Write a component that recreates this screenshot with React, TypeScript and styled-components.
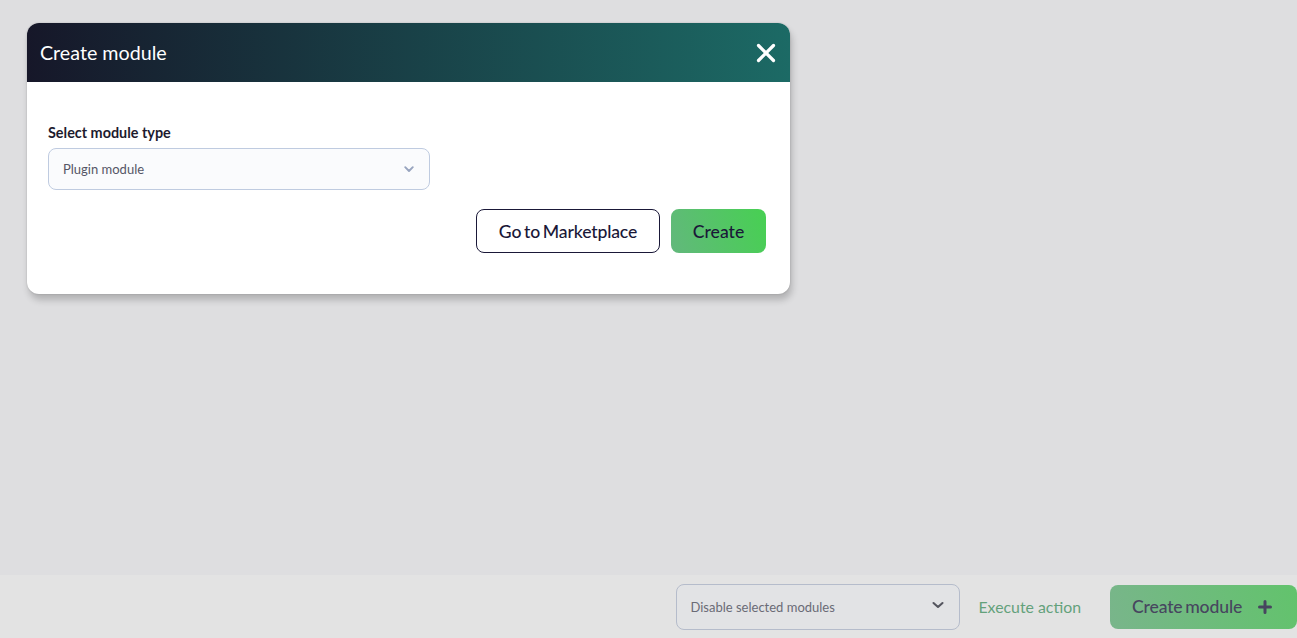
import React from "react";
import styled, { createGlobalStyle } from "styled-components";

const Global = createGlobalStyle`
  html, body { margin: 0; padding: 0; height: 100%; }
  body { font-family: Lato, "Liberation Sans", sans-serif; background: #dedee0; overflow: hidden; }
  #root { height: 100%; }
  * { box-sizing: border-box; }
`;

const Page = styled.div`
  height: 638px;
  display: flex;
  flex-direction: column;
`;

const Backdrop = styled.main`
  flex: 1;
  background: #dedee0;
  padding: 23px 27px;
`;

const Modal = styled.section`
  width: 763px;
  height: 271px;
  border-radius: 12px;
  background: #fff;
  box-shadow: 2px 6px 7px rgba(0, 0, 0, 0.2), 0 0 2px rgba(0, 0, 0, 0.18);
  overflow: hidden;
`;

const ModalHeader = styled.header`
  height: 59px;
  padding: 0 13px;
  display: flex;
  align-items: center;
  justify-content: space-between;
  background: linear-gradient(90deg, #161729 0%, #1c6a65 100%);
`;

const ModalTitle = styled.h2`
  margin: 0;
  font-size: 19.7px;
  font-weight: 400;
  line-height: 24px;
  color: #fff;
`;

const CloseButton = styled.button`
  width: 22px;
  height: 22px;
  padding: 0;
  border: 0;
  background: none;
  display: flex;
  cursor: pointer;
`;

const ModalBody = styled.div`
  padding: 42px 24px 0 21px;
`;

const FieldLabel = styled.label`
  display: block;
  font-size: 14.4px;
  font-weight: 700;
  line-height: 17px;
  color: #1d1b2e;
  margin-bottom: 7px;
`;

const SelectBox = styled.div<{ $w: number; $h: number; $dim?: boolean }>`
  width: ${(p) => p.$w}px;
  height: ${(p) => p.$h}px;
  display: flex;
  align-items: center;
  justify-content: space-between;
  border-radius: 8px;
  border: 1px solid ${(p) => (p.$dim ? "#b5bccb" : "#bfcbe0")};
  background: ${(p) => (p.$dim ? "#e2e3e5" : "#fafbfd")};
  color: ${(p) => (p.$dim ? "#6a6b76" : "#555666")};
  font-size: 13px;
  padding: ${(p) => (p.$dim ? "0 14px 0 13px" : "0 14px")};
`;

const SelectIcon = styled.svg<{ $lift?: boolean }>`
  flex: none;
  margin-top: ${(p) => (p.$lift ? "-4px" : "0")};
`;

const Actions = styled.div`
  display: flex;
  justify-content: flex-end;
  gap: 11px;
  margin-top: 19px;
`;

const ButtonText = `
  font: 500 17.6px Lato, sans-serif;
  white-space: nowrap;
`;

const TightText = `
  word-spacing: -1.5px;
  letter-spacing: -0.16px;
`;

const OutlineButton = styled.button`
  width: 184px;
  height: 44px;
  border-radius: 8px;
  border: 1px solid #1a1838;
  background: #fff;
  color: #1a1838;
  padding: 0;
  ${ButtonText}
  ${TightText}
`;

const PrimaryButton = styled.button`
  width: 95px;
  height: 44px;
  border: 0;
  border-radius: 8px;
  background: linear-gradient(70deg, #62b87c 0%, #47d052 100%);
  color: #1a1838;
  padding: 0;
  ${ButtonText}
`;

const Footer = styled.footer`
  height: 63px;
  background: #e3e3e3;
  display: flex;
  align-items: center;
  justify-content: flex-end;
`;

const ExecuteLink = styled.span`
  font-size: 15.85px;
  color: #63a17b;
  margin: 0 29px 0 18px;
`;

const CreateModuleButton = styled.button`
  width: 187px;
  height: 44px;
  border: 0;
  border-radius: 8px;
  background: linear-gradient(70deg, #79b58b 0%, #62c36c 100%);
  color: #47465f;
  display: flex;
  align-items: center;
  justify-content: flex-start;
  padding: 0 23px 0 22px;
  gap: 16px;
  ${ButtonText}
  ${TightText}
`;

export default function App() {
  return (
    <Page>
      <Global />
      <Backdrop>
        <Modal>
          <ModalHeader>
            <ModalTitle>Create module</ModalTitle>
            <CloseButton aria-label="Close">
              <svg width="22" height="22" viewBox="0 0 22 22" fill="none">
                <path d="M3.5 3.5l15 15M18.5 3.5l-15 15" stroke="#fff" strokeWidth="3.2" strokeLinecap="round" />
              </svg>
            </CloseButton>
          </ModalHeader>
          <ModalBody>
            <FieldLabel>Select module type</FieldLabel>
            <SelectBox $w={382} $h={42}>
              Plugin module
              <SelectIcon width="12" height="12" viewBox="0 0 12 12" fill="none">
                <path d="M2.2 4.2L6 8l3.8-3.8" stroke="#98a4bf" strokeWidth="1.9" strokeLinecap="round" strokeLinejoin="round" />
              </SelectIcon>
            </SelectBox>
            <Actions>
              <OutlineButton>Go to Marketplace</OutlineButton>
              <PrimaryButton>Create</PrimaryButton>
            </Actions>
          </ModalBody>
        </Modal>
      </Backdrop>
      <Footer>
        <SelectBox $w={284} $h={46} $dim>
          Disable selected modules
          <SelectIcon $lift width="14" height="14" viewBox="0 0 14 14" fill="none">
            <path d="M2.5 5l4.5 4 4.5-4" stroke="#55565f" strokeWidth="2.1" strokeLinecap="round" strokeLinejoin="round" />
          </SelectIcon>
        </SelectBox>
        <ExecuteLink>Execute action</ExecuteLink>
        <CreateModuleButton>
          Create module
          <svg width="14" height="14" viewBox="0 0 14 14" fill="none">
            <path d="M7 1.5v11M1.5 7h11" stroke="#47465f" strokeWidth="3" strokeLinecap="round" />
          </svg>
        </CreateModuleButton>
      </Footer>
    </Page>
  );
}
